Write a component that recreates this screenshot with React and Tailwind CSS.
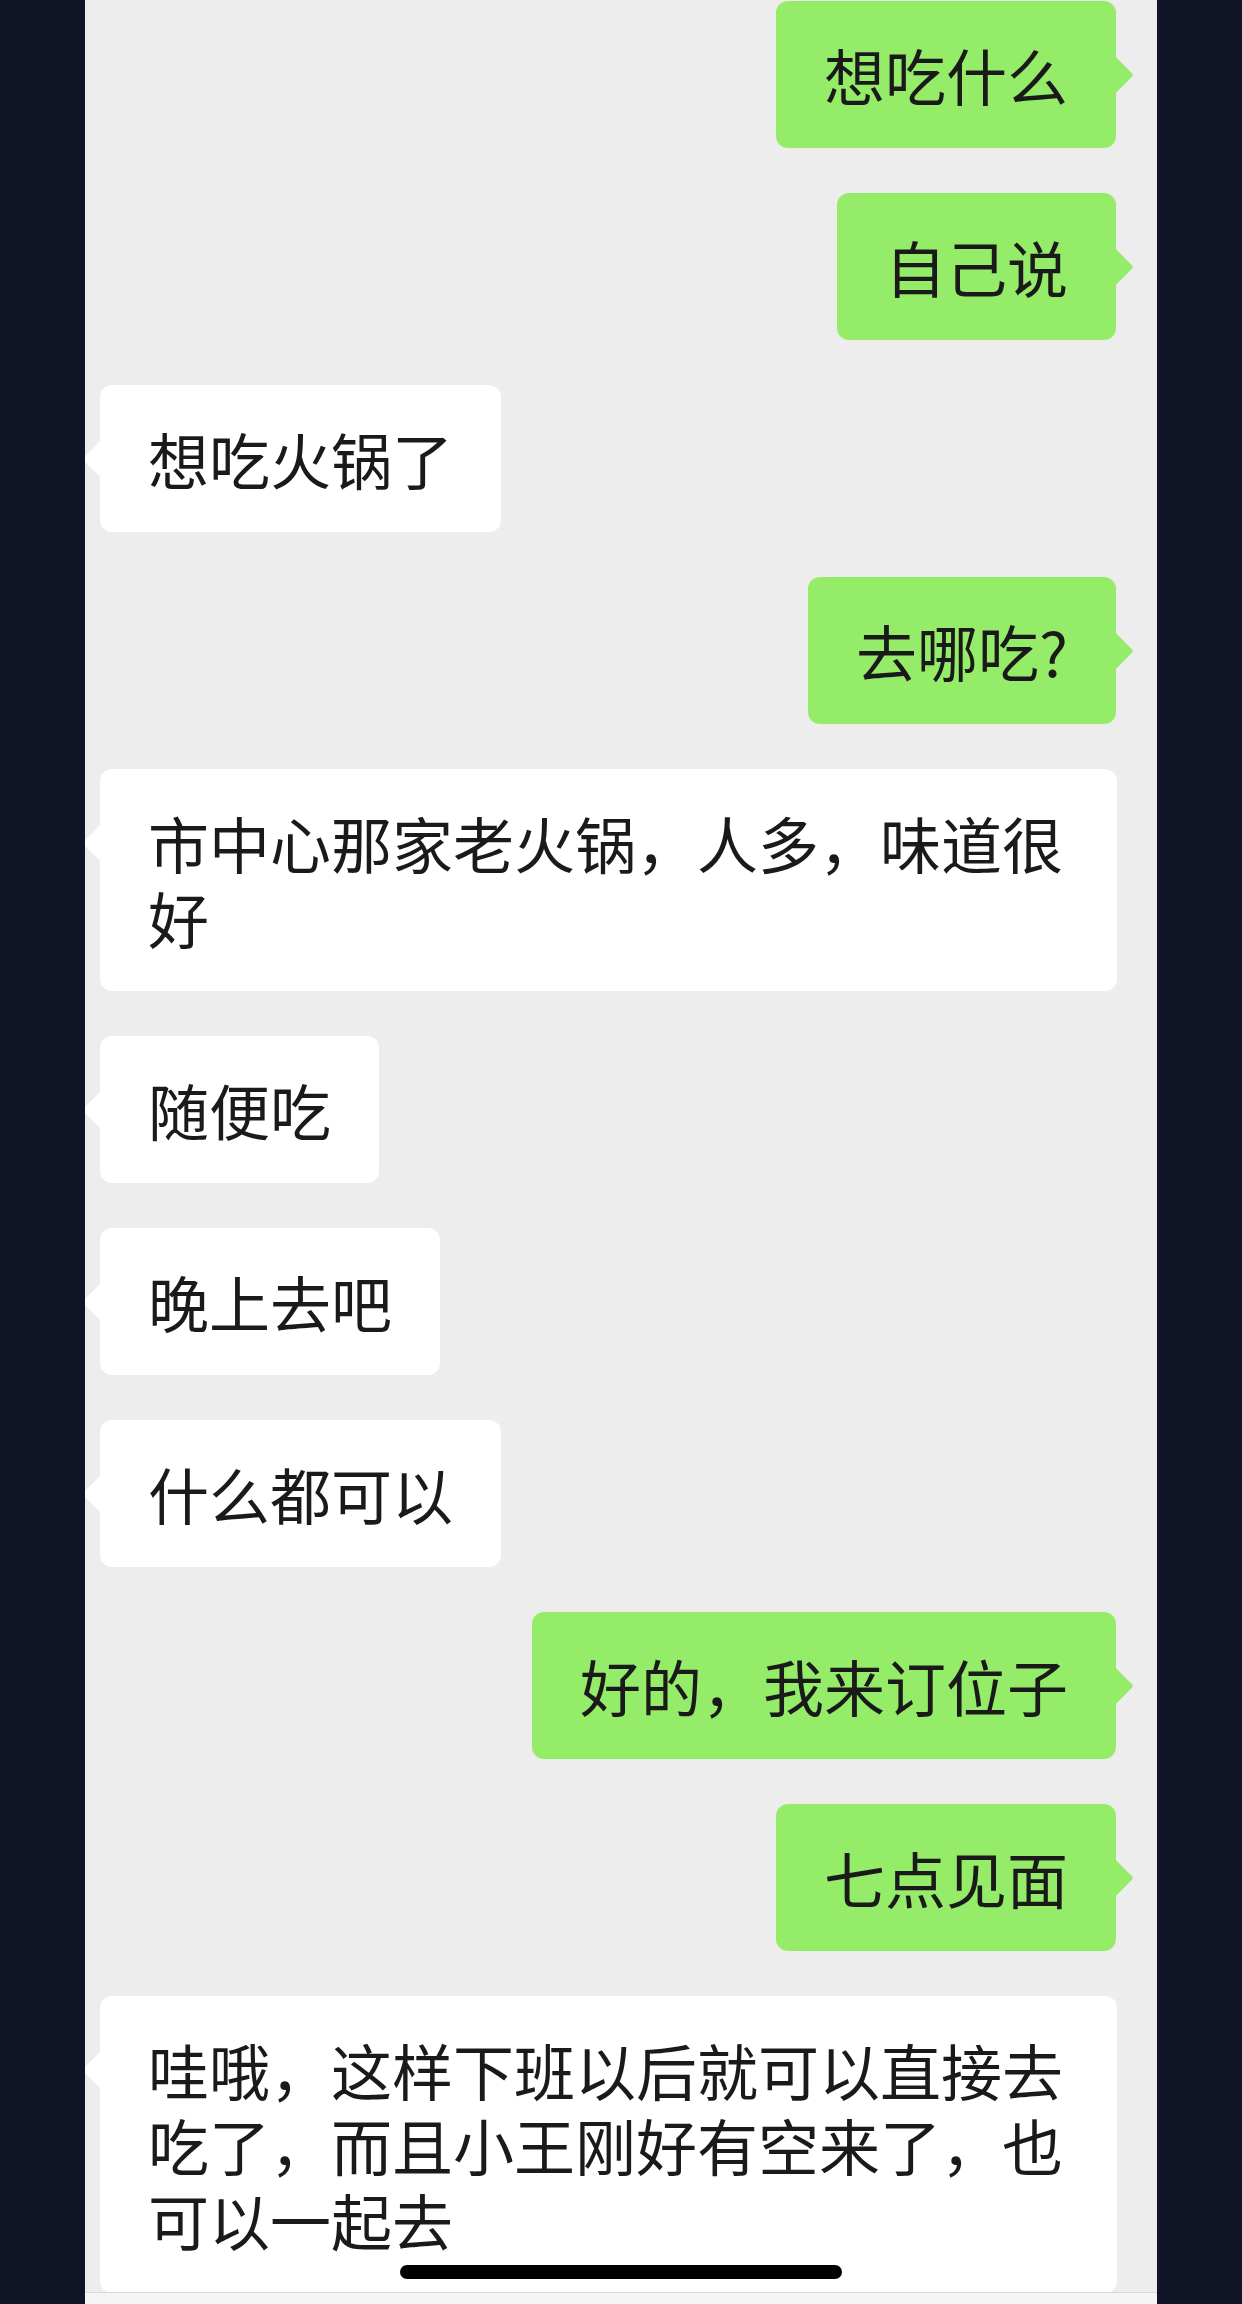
const messages = [
  { side: 'right', text: '想吃什么' },
  { side: 'right', text: '自己说' },
  { side: 'left', text: '想吃火锅了' },
  { side: 'right', text: '去哪吃?' },
  { side: 'left', text: '市中心那家老火锅，人多，味道很好' },
  { side: 'left', text: '随便吃' },
  { side: 'left', text: '晚上去吧' },
  { side: 'left', text: '什么都可以' },
  { side: 'right', text: '好的，我来订位子' },
  { side: 'right', text: '七点见面' },
  { side: 'left', text: '哇哦，这样下班以后就可以直接去吃了，而且小王刚好有空来了，也可以一起去' },
];

function Bubble({ side, text }) {
  const mine = side === 'right';
  return (
    <div className={mine ? 'flex justify-end pr-[41px]' : 'flex justify-start pl-[15px]'}>
      <div
        className={`relative max-w-[1017px] rounded-[12px] px-[48px] py-[36px] text-[61px] leading-[75px] text-[#1a1a1a] ${
          mine ? 'bg-[#95ec69]' : 'bg-white'
        }`}
      >
        {/* tail */}
        <span
          className={`absolute top-[60px] w-[28px] h-[28px] rotate-45 rounded-[3px] ${
            mine ? '-right-[12px] bg-[#95ec69]' : '-left-[12px] bg-white'
          }`}
        />
        <span className="relative break-all">{text}</span>
      </div>
    </div>
  );
}

export default function App() {
  return (
    <div
      className="relative flex w-[1242px] h-[2304px] overflow-hidden bg-[#0f1427]"
      style={{ fontFamily: "'Noto Sans CJK SC', 'Noto Sans', sans-serif" }}
    >
      <div className="w-[85px] shrink-0" />

      {/* Chat column */}
      <div className="relative w-[1072px] shrink-0 h-full overflow-hidden bg-[#ededed]">
        <div className="flex flex-col gap-[45px] pt-[1px]">
          {messages.map((m, i) => (
            <Bubble key={i} side={m.side} text={m.text} />
          ))}
        </div>

        {/* Input bar edge */}
        <div className="absolute left-0 right-0 bottom-0 h-[12px] bg-[#f5f5f5] border-t border-[#d9d9d9]" />
      </div>

      <div className="flex-1" />

      {/* Home indicator */}
      <div className="absolute left-1/2 -translate-x-1/2 bottom-[25px] w-[442px] h-[14px] rounded-full bg-black" />
    </div>
  );
}
